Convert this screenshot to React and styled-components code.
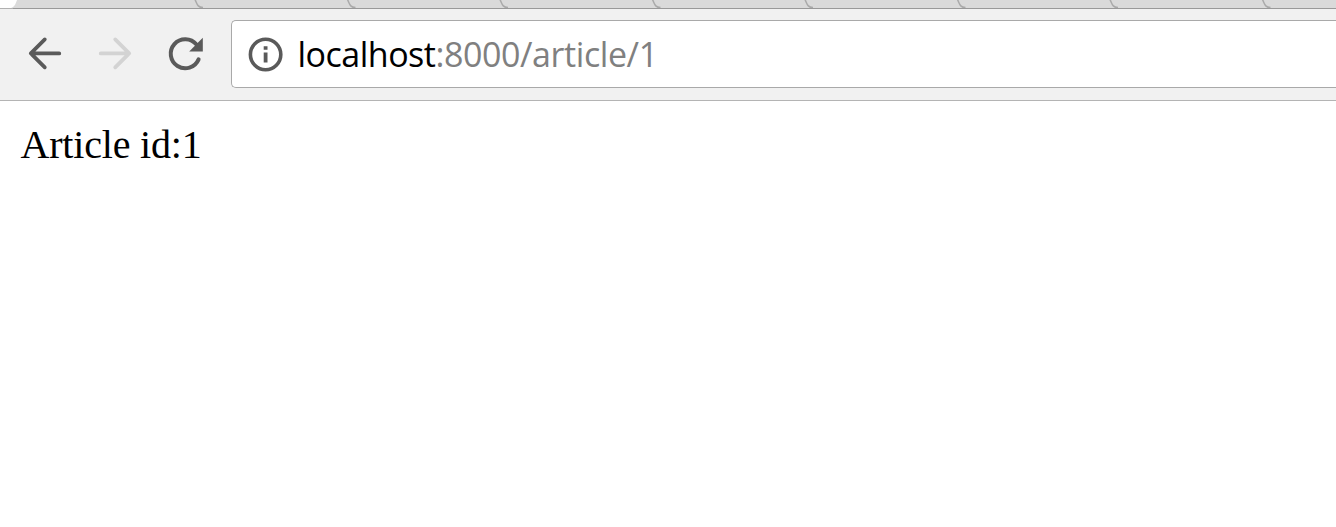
import React from 'react';
import styled, { createGlobalStyle } from 'styled-components';

const GlobalStyle = createGlobalStyle`
  html, body { margin: 0; background: #fff; overflow: hidden; }
`;

const Browser = styled.div`
  display: flex;
  flex-direction: column;
  height: 527px;
  overflow: hidden;
`;

const TabStrip = styled.svg`
  display: block;
  width: 1336px;
  height: 9px;
  flex: none;
`;

const Toolbar = styled.header`
  box-sizing: border-box;
  display: flex;
  align-items: flex-start;
  height: 92px;
  flex: none;
  padding-top: 11px;
  background: #f1f1f1;
  border-bottom: 1px solid #b4b4b4;
`;

const NavButtons = styled.nav`
  display: flex;
  gap: 22px;
  padding: 10px 22px 0 21px;
`;

const NavButton = styled.button`
  display: flex;
  width: 48px;
  height: 48px;
  padding: 0;
  border: 0;
  background: none;
  color: ${(p) => (p.$muted ? '#d3d3d3' : '#5a5a5a')};
`;

const AddressBar = styled.div`
  box-sizing: border-box;
  display: flex;
  align-items: center;
  flex: 1;
  height: 68px;
  padding-left: 16px;
  border: 1px solid #a9a9a9;
  border-right: 0;
  border-radius: 5px 0 0 5px;
  background: #fff;
`;

const Url = styled.div`
  display: flex;
  margin-left: 13.5px;
  font: 400 34px/48px "Open Sans", "Noto Sans", sans-serif;
  white-space: pre;
`;

const Host = styled.span`
  color: #000;
  letter-spacing: -0.5px;
`;

const Path = styled.span`
  color: #808080;
  letter-spacing: -0.42px;
`;

const Page = styled.main`
  padding: 21px 20.5px;
  font: 40px/46px "Liberation Serif", serif;
  letter-spacing: -0.18px;
  color: #000;
`;

const Icon = ({ children }) => (
  <svg width="48" height="48" viewBox="0 0 48 48" fill="none" stroke="currentColor"
    strokeWidth="4" strokeLinecap="round" strokeLinejoin="round">{children}</svg>
);

const separators = [195, 347.5, 500, 652.5, 805, 957.5, 1110, 1262.5];

const Tabs = () => (
  <TabStrip viewBox="0 0 1336 9">
    <rect width="1336" height="9" fill="#dadada" />
    <path d="M0 0H17C15.5 4 14.5 7.5 10.5 8H0Z" fill="#fff" />
    {separators.map((x) => (
      <path key={x} d={`M${x - 0.3} -1C${x + 2} 3 ${x + 2} 7.5 ${x + 8} 7.6`} stroke="#aaa" strokeWidth="1.5" fill="none" />
    ))}
    <rect x="13" y="8" width="1323" height="1" fill="#999" />
    <rect y="8" width="13" height="1" fill="#b0b0b0" />
  </TabStrip>
);

export default function App() {
  return (
    <Browser>
      <GlobalStyle />
      <Tabs />
      <Toolbar>
        <NavButtons>
          <NavButton aria-label="Back">
            <Icon><path d="M38.3 23.4H10M23.8 9.4L9.8 23.4L23.8 37.4" strokeWidth="3.7" /></Icon>
          </NavButton>
          <NavButton aria-label="Forward" $muted>
            <Icon><path d="M9.7 23.4H38M24.2 9.4L38.2 23.4L24.2 37.4" strokeWidth="3.7" /></Icon>
          </NavButton>
          <NavButton aria-label="Reload">
            <Icon>
              <path d="M35.5 14.6A14.5 14.5 0 1 0 37.6 29.4" />
              <path d="M41.8 7.8V21.6H28.2Z" fill="currentColor" stroke="none" />
            </Icon>
          </NavButton>
        </NavButtons>
        <AddressBar>
          <svg width="36" height="36" viewBox="0 0 36 36">
            <circle cx="17.6" cy="18.5" r="15.2" fill="none" stroke="#5a5a5a" strokeWidth="3.6" />
            <path d="M15.7 10.2h3.8v3.6h-3.8zM15.7 16.4h3.8v10.2h-3.8z" fill="#5a5a5a" />
          </svg>
          <Url><Host>localhost</Host><Path>:8000/article/1</Path></Url>
        </AddressBar>
      </Toolbar>
      <Page>Article id:1</Page>
    </Browser>
  );
}
